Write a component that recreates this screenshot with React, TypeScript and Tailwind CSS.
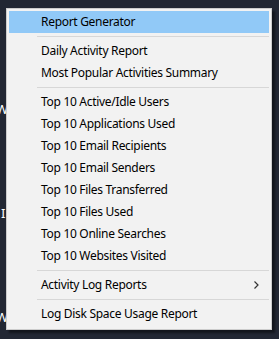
import { Fragment } from 'react'

type Item = { label: string; active?: boolean; sub?: boolean }

const groups: Item[][] = [
  [{ label: 'Report Generator', active: true }],
  [{ label: 'Daily Activity Report' }, { label: 'Most Popular Activities Summary' }],
  [
    { label: 'Top 10 Active/Idle Users' },
    { label: 'Top 10 Applications Used' },
    { label: 'Top 10 Email Recipients' },
    { label: 'Top 10 Email Senders' },
    { label: 'Top 10 Files Transferred' },
    { label: 'Top 10 Files Used' },
    { label: 'Top 10 Online Searches' },
    { label: 'Top 10 Websites Visited' },
  ],
  [{ label: 'Activity Log Reports', sub: true }],
  [{ label: 'Log Disk Space Usage Report' }],
]

function MenuRow({ item }: { item: Item }) {
  return (
    <div
      className={`flex h-[22px] items-center justify-between pl-[32px] pr-[10px] ${
        item.active ? 'bg-[#91c9f7]' : ''
      }`}
    >
      <span>{item.label}</span>
      {item.sub && (
        <svg width="5" height="8" viewBox="0 0 5 8" className="text-[#333]">
          <path d="M0.5 0.5 L4 4 L0.5 7.5" fill="none" stroke="currentColor" strokeWidth="1.2" />
        </svg>
      )}
    </div>
  )
}

export default function App() {
  return (
    <div className="relative h-[339px] w-[279px] overflow-hidden bg-[#222733] font-['Noto_Sans',sans-serif] text-[12px] tracking-[-0.3px] text-black">
      {/* bits of the window behind, cut off at the left edge */}
      <div className="-ml-[4px] flex flex-col items-start pt-[100px] text-[13px] leading-[18px] text-white">
        <span>W</span>
        <span className="ml-[5px] mt-[86px]">I</span>
        <span className="mt-[86px]">W</span>
      </div>

      {/* Context menu */}
      <div className="absolute left-[6px] top-[8px] w-[266px] border border-[#cccccc] bg-[#f2f2f2] p-[2px] pb-[4px] shadow-[3px_3px_2px_rgba(0,0,0,0.45)]">
        {groups.map((g, i) => (
          <Fragment key={i}>
            {i > 0 && (
              <div className="flex h-[7px] items-center pl-[28px]">
                <div className="h-px w-full bg-[#d7d7d7]" />
              </div>
            )}
            {g.map((item) => (
              <MenuRow key={item.label} item={item} />
            ))}
          </Fragment>
        ))}
      </div>
    </div>
  )
}
